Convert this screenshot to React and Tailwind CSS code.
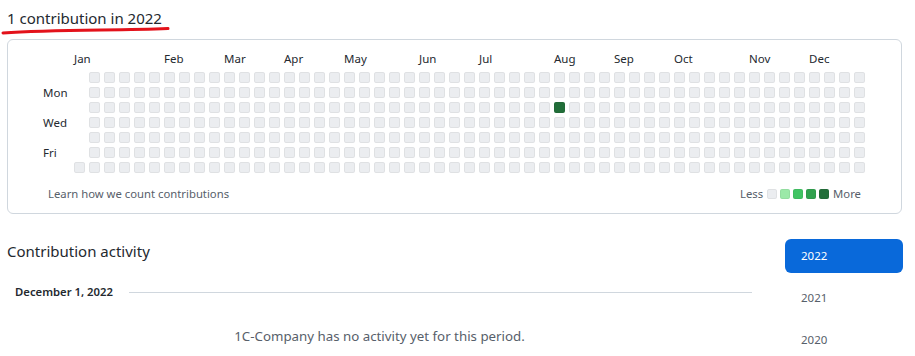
const months = { 0: "Jan", 6: "Feb", 10: "Mar", 14: "Apr", 18: "May", 23: "Jun", 27: "Jul", 32: "Aug", 36: "Sep", 40: "Oct", 45: "Nov", 49: "Dec" }
const dayLabels = ["", "Mon", "", "Wed", "", "Fri", ""]
const legend = ["bg-[#ebedf0]", "bg-[#9be9a8]", "bg-[#40c463]", "bg-[#30a14e]", "bg-[#216e39]"]

function Week({ index }) {
  return (
    <div className="flex w-[11px] flex-col gap-[4px]">
      <div className="relative mb-[2px] h-[15px] whitespace-nowrap text-[11.5px] leading-[15px] text-[#24292f]">
        {months[index] || ""}
      </div>
      {Array.from({ length: 7 }).map((_, day) => {
        if (index === 0 && day < 6) return <div key={day} className="h-[11px] w-[11px]" />
        const active = index === 32 && day === 2
        return (
          <div
            key={day}
            className={`h-[11px] w-[11px] rounded-[2px] outline outline-1 -outline-offset-1 outline-[rgba(27,31,36,0.06)] ${active ? "bg-[#216e39]" : "bg-[#ebedf0]"}`}
          />
        )
      })}
    </div>
  )
}

export default function App() {
  return (
    <div className="w-[915px] bg-white pl-[7px] text-[#24292f]" style={{ fontFamily: '"Noto Sans", "Open Sans", sans-serif' }}>
      <div className="relative h-[39px]">
        <h2 className="pt-[7px] text-[15px] leading-[22px] font-normal">1 contribution in 2022</h2>
        <svg className="absolute left-[-6px] top-[26px]" width="176" height="10" viewBox="0 0 176 10">
          <path d="M2 7 C 30 5, 60 4.5, 100 4 S 155 3, 167 2.5" stroke="#e3121b" strokeWidth="3" fill="none" strokeLinecap="round" />
        </svg>
      </div>

      <div className="w-[895px] rounded-[6px] border border-[#d0d7de]">
        <div className="flex pl-[35px] pt-[11px]">
          <div className="flex w-[31px] flex-col gap-[4px]">
            <div className="mb-[2px] h-[15px]" />
            {dayLabels.map((d, i) => (
              <div key={i} className="h-[11px] text-[11.5px] leading-[11px] text-[#24292f]">{d}</div>
            ))}
          </div>
          <div className="flex gap-[4px]">
            {Array.from({ length: 53 }).map((_, i) => (
              <Week key={i} index={i} />
            ))}
          </div>
        </div>
        <div className="mt-[13px] flex items-center justify-between pb-[11px] pl-[40px] pr-[40px] text-[11.3px] leading-[16px] text-[#57606a]">
          <span>Learn how we count contributions</span>
          <div className="flex items-center">
            <span className="mr-[4px]">Less</span>
            <div className="flex gap-[3px]">
              {legend.map((c) => (
                <div key={c} className={`h-[10px] w-[10px] rounded-[2px] outline outline-1 -outline-offset-1 outline-[rgba(27,31,36,0.06)] ${c}`} />
              ))}
            </div>
            <span className="ml-[4px]">More</span>
          </div>
        </div>
      </div>

      <div className="mt-[25px] flex">
        <div className="w-[745px]">
          <h2 className="text-[15px] leading-[24px] font-normal">Contribution activity</h2>
          <div className="mt-[20px] flex items-center pl-[8px]">
            <span className="text-[11.3px] leading-[18px] font-semibold text-[#24292f]">December 1, 2022</span>
            <div className="ml-[16px] h-px flex-1 bg-[#d0d7de]" />
          </div>
          <p className="mt-[25px] text-center text-[13.3px] leading-[20px] text-[#57606a]">1C-Company has no activity yet for this period.</p>
        </div>
        <div className="ml-[33px] flex w-[118px] flex-col text-[11.5px] leading-[18px]">
          <div className="flex h-[34px] items-center rounded-[6px] bg-[#0969da] pl-[16px] text-white">2022</div>
          <div className="mt-[8px] flex h-[34px] items-center pl-[16px] text-[#57606a]">2021</div>
          <div className="mt-[8px] flex h-[34px] items-center pl-[16px] text-[#57606a]">2020</div>
        </div>
      </div>
    </div>
  )
}
